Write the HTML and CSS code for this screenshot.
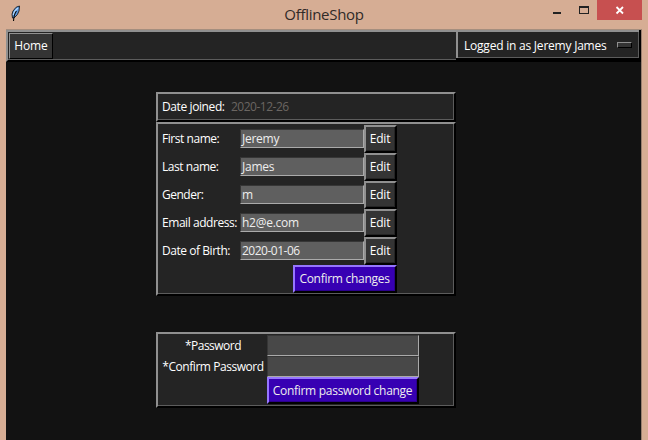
FILE: index.html
```
<!DOCTYPE html>
<html lang="en">
<head>
<meta charset="utf-8">
<title>OfflineShop</title>
<link rel="stylesheet" href="styles.css">
</head>
<body>
<div class="window">
  <header class="titlebar">
    <svg class="feather" width="10" height="17" viewBox="0 0 10 17"><path d="M8.5 1 Q5 1 2 6 Q.3 9 1.5 13 L3 13 Q7 10 8 6Z" fill="#5b9be5" stroke="#24272e"/><path d="M7 3 Q3 6 2.5 10" fill="none" stroke="#b8dcff" stroke-width="1.3"/><path d="M5.5 6 Q3 9 2.5 16" fill="none" stroke="#080808" stroke-width="1.1"/></svg>
    <h1 class="title">OfflineShop</h1>
    <div class="controls">
      <svg width="90" height="20" viewBox="0 0 90 20"><path d="M45 0H90V20H45Z" fill="#c75050"/><path d="M1 12H9V14H1Z" fill="#222"/><path d="M27 6H37V14H27ZM28 8V13H36V8Z" fill="#222" fill-rule="evenodd"/><path d="M64.5 7 L71 13.5 M71 7 L64.5 13.5" stroke="#fff" stroke-width="1.8"/></svg>
    </div>
  </header>
  <main class="app">
    <nav class="navbar">
      <div class="nav-main raised"><button class="home">Home</button></div>
      <button class="account"><span class="account-name">Logged in as Jeremy James</span><i class="indicator"></i></button>
    </nav>
    <section class="panel raised joined"><span class="joined-label">Date joined:</span><span class="date">2020-12-26</span></section>
    <section class="panel raised details">
      <div class="row"><label class="l-first">First name:</label><div class="field"><span class="v-first">Jeremy</span></div><button class="btn">Edit</button></div>
      <div class="row"><label class="l-last">Last name:</label><div class="field"><span class="v-last">James</span></div><button class="btn">Edit</button></div>
      <div class="row"><label class="l-gender">Gender:</label><div class="field"><span>m</span></div><button class="btn">Edit</button></div>
      <div class="row"><label class="l-email">Email address:</label><div class="field"><span class="v-email">h2@e.com</span></div><button class="btn">Edit</button></div>
      <div class="row"><label class="l-birth">Date of Birth:</label><div class="field"><span class="v-date">2020-01-06</span></div><button class="btn">Edit</button></div>
      <button class="btn primary confirm">Confirm changes</button>
    </section>
    <section class="panel raised password">
      <label class="l-pass">*Password</label><div class="field"></div>
      <label class="l-confirm">*Confirm Password</label><div class="field"></div>
      <button class="btn primary change">Confirm password change</button>
    </section>
  </main>
</div>
</body>
</html>
```
FILE: styles.css
```
* { box-sizing: border-box; }
body { margin: 0; overflow: hidden; background: #d6ad94; color: #fff; font: 12px/16px "Open Sans", "Noto Sans", sans-serif; }
button { margin: 0; padding: 0; font: inherit; color: inherit; border-radius: 0; white-space: nowrap; }
label { white-space: nowrap; letter-spacing: -.45px; }
.window { width: 648px; height: 440px; padding: 0 6px; }
.titlebar { display: grid; grid-template-columns: 90px 1fr 90px; height: 29px; }
.feather { margin: 5px 0 0 5px; }
.title { margin: 4px 0 0; text-align: center; font-size: 15px; line-height: 20px; font-weight: 400; color: #302a28; letter-spacing: -.3px; }
.controls { width: 90px; }
.controls svg { display: block; }
.app { width: 636px; height: 411px; border-top: 1px solid #a58e7e; border-right: 1px solid #99806f; background: #121212; }
.raised { background: #242424; border: 2px solid; border-color: #909090 #000 #000 #909090; box-shadow: inset -1px -1px #5c5c5c; }
.navbar { display: flex; height: 32px; background: #000; }
.nav-main { width: 450px; height: 32px; padding: 1px; border-right: 0; box-shadow: inset 0 -1px #5c5c5c; }
.home { display: block; width: 44px; height: 26px; background: #343434; border: 1px solid; border-color: #909090 #000 #000 #909090; letter-spacing: -.1px; }
.account { display: flex; align-items: center; width: 183px; height: 28px; padding: 2px 7px 0 6px; background: #242424; border: 2px solid #909090; border-right: 0; border-bottom: 0; box-shadow: inset -1px -1px #5c5c5c; }
.account-name { flex: 1; text-align: left; letter-spacing: -.22px; }
.indicator { width: 15px; height: 6px; margin-bottom: 2px; background: #343434; border: 1px solid; border-color: #909090 #000 #000 #909090; }
.panel { width: 300px; margin-left: 150px; }
.joined { display: flex; align-items: center; height: 30px; margin-top: 30px; padding-left: 4px; }
.joined-label { width: 69px; letter-spacing: -.4px; }
.date, .v-date { letter-spacing: -.5px; }
.date { color: #6b6662; }
.details { height: 174px; padding: 1px 0; }
.row { display: grid; grid-template-columns: 78px 124px 33px; align-items: center; height: 28px; padding-left: 4px; }
.l-gender, .l-pass { letter-spacing: -.5px; }
.l-birth { letter-spacing: -.45px; }
.l-email { letter-spacing: -.45px; }
.field { height: 19px; margin-bottom: 1px; padding: 0 1px; background: #5f5f5f; border: 1px solid; border-color: #363636 #aaa #aaa #363636; color: #eee; line-height: 17px; letter-spacing: -.25px; }
.btn { height: 28px; background: #343434; border: 2px solid; border-color: #909090 #000 #000 #909090; box-shadow: inset -1px -1px #242424; letter-spacing: -.2px; padding-right: 1px; }
.primary { display: block; background: #3700b3; border-color: #9676ff #000 #000 #9676ff; box-shadow: inset -1px -1px #2b008c; color: #eee; letter-spacing: -.28px; }
.confirm { width: 104px; margin-left: 135px; }
.password { display: grid; grid-template-columns: 109px 152px; grid-template-rows: 21px 21px 27px; height: 76px; margin-top: 36px; padding-top: 1px; text-align: center; }
.password label { padding-left: 1px; line-height: 22px; }
.password .field { height: 21px; margin: 0; background: #484848; }
.change { grid-column: 2; height: 27px; }
```
